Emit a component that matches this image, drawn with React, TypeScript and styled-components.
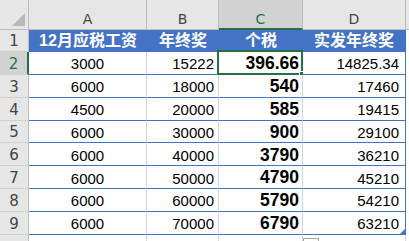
import React from "react";
import styled, { createGlobalStyle, css } from "styled-components";

const GlobalStyle = createGlobalStyle`
  html, body {
    margin: 0;
    padding: 0;
    background: #ffffff;
    overflow: hidden;
  }
  body {
    font-family: "Liberation Sans", Arial, "Noto Sans CJK SC", sans-serif;
  }
`;

const BLUE = "#4472c4";
const GREEN = "#217346";
const GRID = "#d4d4d4";

interface RowData {
  salary: string;
  bonus: string;
  tax: string;
  net: string;
}

const rows: RowData[] = [
  { salary: "3000", bonus: "15222", tax: "396.66", net: "14825.34" },
  { salary: "6000", bonus: "18000", tax: "540", net: "17460" },
  { salary: "4500", bonus: "20000", tax: "585", net: "19415" },
  { salary: "6000", bonus: "30000", tax: "900", net: "29100" },
  { salary: "6000", bonus: "40000", tax: "3790", net: "36210" },
  { salary: "6000", bonus: "50000", tax: "4790", net: "45210" },
  { salary: "6000", bonus: "60000", tax: "5790", net: "54210" },
  { salary: "6000", bonus: "70000", tax: "6790", net: "63210" },
];

const headers = ["12月应税工资", "年终奖", "个税", "实发年终奖"];
const letters = ["A", "B", "C", "D"];

export default function App() {
  return (
    <>
      <GlobalStyle />
      <Sheet>
        <Corner>
          <CornerMark />
        </Corner>
        {letters.map((l) => (
          <ColHeader key={l} $selected={l === "C"}>
            {l}
          </ColHeader>
        ))}
        <Filler $head />

        <RowHeader>1</RowHeader>
        {headers.map((h) => (
          <HeadCell key={h}>{h}</HeadCell>
        ))}
        <Filler />

        {rows.map((r, i) => {
          const n = i + 2;
          const last = i === rows.length - 1;
          return (
            <React.Fragment key={n}>
              <RowHeader $selected={n === 2}>{n}</RowHeader>
              <Cell $align="center">{r.salary}</Cell>
              <Cell>{r.bonus}</Cell>
              <Cell $bold>
                {r.tax}
                {n === 2 && (
                  <ActiveBox>
                    <FillHandle />
                  </ActiveBox>
                )}
              </Cell>
              <Cell $edge>
                {r.net}
                {last && <ResizeMark />}
              </Cell>
              <Filler />
            </React.Fragment>
          );
        })}

        <RowHeader $tail />
        <TailCell />
        <TailCell />
        <TailCell />
        <TailCell>
          <QuickBox />
        </TailCell>
        <Filler />
      </Sheet>
    </>
  );
}

const Sheet = styled.div`
  display: grid;
  grid-template-columns: 29px 118px 72px 84px 103px 3px;
  grid-template-rows: 30px 22px repeat(8, 22.85px) 10px;
  width: 409px;
  height: 241px;
  overflow: hidden;
`;

const Corner = styled.div`
  position: relative;
  box-sizing: border-box;
  background: #e6e6e6;
  border-right: 1px solid #bdbdbd;
  border-bottom: 1px solid #bdbdbd;
`;

const CornerMark = styled.div`
  position: absolute;
  right: 3px;
  bottom: 3px;
  width: 0;
  height: 0;
  border-left: 13px solid transparent;
  border-bottom: 13px solid #b7b7b7;
`;

const ColHeader = styled.div<{ $selected?: boolean }>`
  box-sizing: border-box;
  display: flex;
  align-items: flex-end;
  justify-content: center;
  padding-bottom: 3px;
  font-family: "DejaVu Sans", "Liberation Sans", sans-serif;
  font-size: 14px;
  line-height: 1;
  color: #444444;
  background: #e6e6e6;
  border-right: 1px solid #bdbdbd;
  border-bottom: 1px solid #bdbdbd;
  ${(p) =>
    p.$selected &&
    css`
      background: #d2d2d2;
      color: ${GREEN};
      border-bottom: 2px solid ${GREEN};
      padding-bottom: 2px;
    `}
`;

const RowHeader = styled.div<{ $selected?: boolean; $tail?: boolean }>`
  box-sizing: border-box;
  display: flex;
  align-items: flex-end;
  justify-content: center;
  padding-bottom: 2px;
  font-family: "DejaVu Sans", "Liberation Sans", sans-serif;
  font-size: 15px;
  line-height: 1;
  color: #444444;
  background: #e6e6e6;
  border-right: 1px solid #bdbdbd;
  border-bottom: 1px solid #d0d0d0;
  ${(p) =>
    p.$selected &&
    css`
      background: #d2d2d2;
      color: ${GREEN};
      border-right: 2px solid ${GREEN};
    `}
  ${(p) =>
    p.$tail &&
    css`
      border-bottom: none;
    `}
`;

const HeadCell = styled.div`
  box-sizing: border-box;
  display: flex;
  align-items: center;
  justify-content: center;
  background: ${BLUE};
  color: #ffffff;
  font-family: "Liberation Sans", "Noto Sans CJK SC", sans-serif;
  font-weight: 700;
  font-size: 16px;
  line-height: 1;
  white-space: nowrap;
  &:nth-child(11) {
    border-right: 1px solid ${BLUE};
  }
`;

const Cell = styled.div<{ $align?: "center" | "right"; $bold?: boolean; $edge?: boolean }>`
  position: relative;
  box-sizing: border-box;
  display: flex;
  align-items: center;
  justify-content: ${(p) => (p.$align === "center" ? "center" : "flex-end")};
  padding: 2px 4px 0 4px;
  font-size: ${(p) => (p.$bold ? "17.5px" : "15px")};
  font-weight: ${(p) => (p.$bold ? 700 : 400)};
  line-height: 1;
  color: #000000;
  background: #ffffff;
  border-right: 1px solid ${(p) => (p.$edge ? BLUE : GRID)};
  border-bottom: 1px solid ${BLUE};
  white-space: nowrap;
  ${(p) =>
    p.$bold &&
    css`
      padding-right: 3px;
    `}
  ${(p) =>
    p.$edge &&
    css`
      padding-right: 6px;
    `}
`;

const TailCell = styled.div`
  position: relative;
  box-sizing: border-box;
  background: #ffffff;
  border-right: 1px solid ${GRID};
`;

const Filler = styled.div<{ $head?: boolean }>`
  background: ${(p) => (p.$head ? "#e6e6e6" : "#ffffff")};
  border-bottom: ${(p) => (p.$head ? "1px solid #bdbdbd" : "none")};
`;

const ActiveBox = styled.div`
  position: absolute;
  left: -2px;
  top: -2px;
  right: -1px;
  bottom: -1px;
  border: 2px solid ${GREEN};
  pointer-events: none;
`;

const FillHandle = styled.div`
  position: absolute;
  right: -5px;
  bottom: -5px;
  width: 5px;
  height: 5px;
  background: ${GREEN};
  border: 1px solid #ffffff;
`;

const ResizeMark = styled.div`
  position: absolute;
  right: 0;
  bottom: 0;
  width: 0;
  height: 0;
  border-left: 5px solid transparent;
  border-bottom: 5px solid ${BLUE};
`;

const QuickBox = styled.div`
  position: absolute;
  left: 0;
  top: 3px;
  width: 16px;
  height: 14px;
  box-sizing: border-box;
  border: 1px solid #a6a6a6;
  background: #ffffff;
`;
